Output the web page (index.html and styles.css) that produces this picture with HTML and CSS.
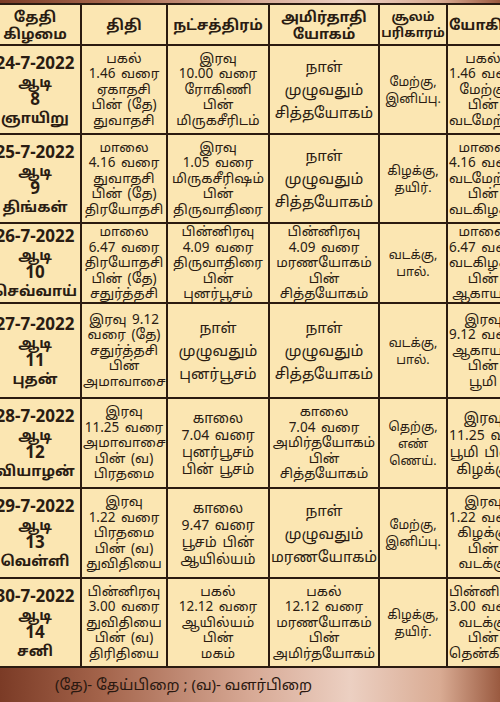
FILE: index.html
```html
<!DOCTYPE html>
<html lang="ta">
<head>
<meta charset="utf-8">
<title>ஆடி நாள்காட்டி</title>
<link rel="stylesheet" href="styles.css">
</head>
<body>
<div class="page">
  <div class="frame">
    <table class="cal">
      <colgroup>
        <col class="c1"><col class="c2"><col class="c3"><col class="c4"><col class="c5"><col class="c6">
      </colgroup>
      <thead>
        <tr class="head">
          <th>தேதி<br>கிழமை</th>
          <th>திதி</th>
          <th>நட்சத்திரம்</th>
          <th>அமிர்தாதி<br>யோகம்</th>
          <th class="small">சூலம்<br>பரிகாரம்</th>
          <th>யோகினி</th>
        </tr>
      </thead>
      <tbody>
        <tr class="r1">
          <td class="date"><span class="dn">24-7-2022</span><span class="dt">ஆடி</span><span class="dn">8</span><span class="dt">ஞாயிறு</span></td>
          <td>பகல்<br>1.46 வரை<br>ஏகாதசி<br>பின் (தே)<br>துவாதசி</td>
          <td>இரவு<br>10.00 வரை<br>ரோகிணி<br>பின்<br>மிருகசீரிடம்</td>
          <td class="big">நாள்<br>முழுவதும்<br>சித்தயோகம்</td>
          <td class="sm">மேற்கு,<br>இனிப்பு.</td>
          <td>பகல்<br>1.46 வரை<br>மேற்கு<br>பின்<br>வடமேற்கு</td>
        </tr>
        <tr class="r2">
          <td class="date"><span class="dn">25-7-2022</span><span class="dt">ஆடி</span><span class="dn">9</span><span class="dt">திங்கள்</span></td>
          <td>மாலை<br>4.16 வரை<br>துவாதசி<br>பின் (தே)<br>திரயோதசி</td>
          <td>இரவு<br>1.05 வரை<br>மிருகசீரிஷம்<br>பின்<br>திருவாதிரை</td>
          <td class="big">நாள்<br>முழுவதும்<br>சித்தயோகம்</td>
          <td class="sm">கிழக்கு,<br>தயிர்.</td>
          <td>மாலை<br>4.16 வரை<br>வடமேற்கு<br>பின்<br>வடகிழக்கு</td>
        </tr>
        <tr class="r3">
          <td class="date"><span class="dn">26-7-2022</span><span class="dt">ஆடி</span><span class="dn">10</span><span class="dt">செவ்வாய்</span></td>
          <td>மாலை<br>6.47 வரை<br>திரயோதசி<br>பின் (தே)<br>சதுர்த்தசி</td>
          <td>பின்னிரவு<br>4.09 வரை<br>திருவாதிரை<br>பின்<br>புனர்பூசம்</td>
          <td>பின்னிரவு<br>4.09 வரை<br>மரணயோகம்<br>பின்<br>சித்தயோகம்</td>
          <td class="sm">வடக்கு,<br>பால்.</td>
          <td>மாலை<br>6.47 வரை<br>வடகிழக்கு<br>பின்<br>ஆகாயம்</td>
        </tr>
        <tr class="r4">
          <td class="date"><span class="dn">27-7-2022</span><span class="dt">ஆடி</span><span class="dn">11</span><span class="dt">புதன்</span></td>
          <td>இரவு 9.12<br>வரை (தே)<br>சதுர்த்தசி<br>பின்<br>அமாவாசை</td>
          <td class="big">நாள்<br>முழுவதும்<br>புனர்பூசம்</td>
          <td class="big">நாள்<br>முழுவதும்<br>சித்தயோகம்</td>
          <td class="sm">வடக்கு,<br>பால்.</td>
          <td>இரவு<br>9.12 வரை<br>ஆகாயம்<br>பின்<br>பூமி</td>
        </tr>
        <tr class="r5">
          <td class="date"><span class="dn">28-7-2022</span><span class="dt">ஆடி</span><span class="dn">12</span><span class="dt">வியாழன்</span></td>
          <td>இரவு<br>11.25 வரை<br>அமாவாசை<br>பின் (வ)<br>பிரதமை</td>
          <td class="mid">காலை<br>7.04 வரை<br>புனர்பூசம்<br>பின் பூசம்</td>
          <td>காலை<br>7.04 வரை<br>அமிர்தயோகம்<br>பின்<br>சித்தயோகம்</td>
          <td class="sm">தெற்கு,<br>எண்<br>ணெய்.</td>
          <td class="mid">இரவு<br>11.25 வரை<br>பூமி பின்<br>கிழக்கு</td>
        </tr>
        <tr class="r6">
          <td class="date"><span class="dn">29-7-2022</span><span class="dt">ஆடி</span><span class="dn">13</span><span class="dt">வெள்ளி</span></td>
          <td>இரவு<br>1.22 வரை<br>பிரதமை<br>பின் (வ)<br>துவிதியை</td>
          <td class="mid">காலை<br>9.47 வரை<br>பூசம் பின்<br>ஆயில்யம்</td>
          <td class="big">நாள்<br>முழுவதும்<br>மரணயோகம்</td>
          <td class="sm">மேற்கு,<br>இனிப்பு.</td>
          <td>இரவு<br>1.22 வரை<br>கிழக்கு<br>பின்<br>வடக்கு</td>
        </tr>
        <tr class="r7">
          <td class="date"><span class="dn">30-7-2022</span><span class="dt">ஆடி</span><span class="dn">14</span><span class="dt">சனி</span></td>
          <td>பின்னிரவு<br>3.00 வரை<br>துவிதியை<br>பின் (வ)<br>திரிதியை</td>
          <td>பகல்<br>12.12 வரை<br>ஆயில்யம்<br>பின்<br>மகம்</td>
          <td>பகல்<br>12.12 வரை<br>மரணயோகம்<br>பின்<br>அமிர்தயோகம்</td>
          <td class="sm">கிழக்கு,<br>தயிர்.</td>
          <td>பின்னிரவு<br>3.00 வரை<br>வடக்கு<br>பின்<br>தென்கிழக்கு</td>
        </tr>
      </tbody>
    </table>
  </div>
  <div class="legend">(தே)- தேய்பிறை ; (வ)- வளர்பிறை</div>
</div>
</body>
</html>
```

FILE: styles.css
```css
html, body {
  margin: 0;
  padding: 0;
}
body {
  width: 500px;
  height: 702px;
  overflow: hidden;
  background: linear-gradient(90deg, #7b3b26 0%, #a3634a 20%, #d7a995 50%, #ecd0c2 70%, #d9ab93 88%, #9a5a40 100%);
  font-family: "Noto Sans", "Noto Sans Tamil", "Lohit Tamil", "DejaVu Sans", sans-serif;
  color: #2a1c12;
}
.page {
  padding-top: 3px;
}
.frame {
  width: 500px;
  overflow: hidden;
}
.cal {
  margin-left: -12px;
  border-collapse: collapse;
  table-layout: fixed;
  width: 530px;
  background: #fbe6b2;
}
.c1 { width: 92px; }
.c2 { width: 86px; }
.c3 { width: 102px; }
.c4 { width: 110px; }
.c5 { width: 68px; }
.c6 { width: 72px; }
.cal th, .cal td {
  border: 2px solid #2b1b10;
  text-align: center;
  vertical-align: middle;
  padding: 0 1px;
  overflow: hidden;
  white-space: nowrap;
}
.cal th {
  font-size: 14.5px;
  line-height: 17px;
  font-weight: 700;
}
.cal th.small {
  font-size: 12.5px;
  line-height: 16px;
}
.head { height: 41px; }
.r1 { height: 89px; }
.r2 { height: 89px; }
.r3 { height: 80px; }
.r4 { height: 95px; }
.r5 { height: 90px; }
.r6 { height: 90px; }
.r7 { height: 89px; }
.cal td {
  font-size: 13.5px;
  line-height: 15.5px;
  word-spacing: 2px;
}
.cal td.date {
  font-weight: 700;
  word-spacing: 0;
}
.dn {
  display: block;
  font-size: 17px;
  line-height: 18px;
}
.dt {
  display: block;
  font-size: 14.5px;
  line-height: 18px;
}
.cal td.big {
  font-size: 15px;
  line-height: 23px;
}
.cal td.mid {
  font-size: 14px;
  line-height: 17px;
}
.cal td.sm {
  font-size: 12.5px;
  line-height: 17px;
  word-spacing: 0;
}
.legend {
  padding: 6px 0 0 55px;
  font-size: 15px;
  color: #2a1810;
}
```
